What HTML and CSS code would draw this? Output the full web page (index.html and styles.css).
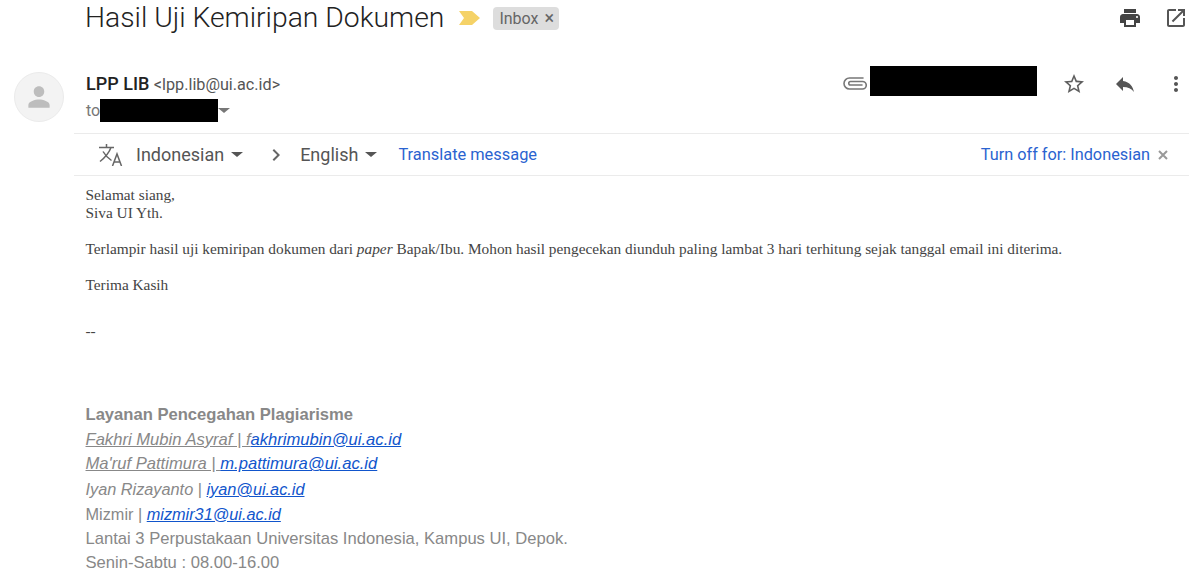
FILE: index.html
```html
<!DOCTYPE html>
<html>
<head>
  <title>Hasil Uji Kemiripan Dokumen</title>
  <link rel="stylesheet" href="styles.css">
</head>
<body>
  <div class="subject-row">
    <h1 class="subject">Hasil Uji Kemiripan Dokumen</h1>
    <svg class="marker" width="21" height="14" viewBox="0 0 21 14"><path d="M0 0H13L21 7L13 14H0L5 7Z" fill="#f5d267"/></svg>
    <span class="label">Inbox <span class="label-x">×</span></span>
    <div class="top-icons">
      <svg width="24" height="24" viewBox="0 0 24 24"><path fill="#444" d="M19 8H5c-1.66 0-3 1.34-3 3v6h4v4h12v-4h4v-6c0-1.66-1.34-3-3-3zm-3 11H8v-5h8v5zm3-7c-.55 0-1-.45-1-1s.45-1 1-1 1 .45 1 1-.45 1-1 1zm-1-9H6v4h12V3z"/></svg>
      <svg width="24" height="24" viewBox="0 0 24 24"><path fill="#555" d="M19 19H5V5h7V3H5c-1.1 0-2 .9-2 2v14c0 1.1.9 2 2 2h14c1.1 0 2-.9 2-2v-7h-2v7zM14 3v2h3.59l-9.83 9.83 1.41 1.41L19 6.41V10h2V3h-7z"/></svg>
    </div>
  </div>

  <div class="sender-row">
    <div class="avatar">
      <svg width="30" height="30" viewBox="0 0 24 24"><path fill="#bdbdbd" d="M12 12c2.500 0 4.200-2 4.200-4.400S14.500 3.300 12 3.300 7.800 5.200 7.800 7.600 9.500 12 12 12zm0 2c-3 0-8.500 1.500-8.500 4.300V20.500h17v-2.200C20.500 15.500 15 14 12 14z"/></svg>
    </div>
    <div class="sender-info">
      <div class="from"><b>LPP LIB</b> <span class="address">&lt;lpp.lib@ui.ac.id&gt;</span></div>
      <div class="to">to<span class="redact redact-to"></span><span class="caret caret-light"></span></div>
    </div>
    <div class="sender-actions">
      <svg class="clip" width="24" height="13" viewBox="0 0 24 13"><path fill="none" stroke="#777" stroke-width="1.600" stroke-linecap="round" d="M20 1H6.500a5.500 5.500 0 0 0 0 11H19.500a3.700 3.700 0 0 0 0-7.500H7.500a1.700 1.700 0 0 0 0 3.500H19"/></svg>
      <span class="redact redact-date"></span>
      <svg class="star" width="24" height="24" viewBox="0 0 24 24"><path fill="#5f5f5f" d="M22 9.240l-7.190-.62L12 2 9.190 8.630 2 9.240l5.460 4.730L5.820 21 12 17.270 18.180 21l-1.630-7.030L22 9.240zM12 15.400l-3.760 2.270 1-4.280-3.320-2.880 4.380-.38L12 6.100l1.710 4.040 4.380.38-3.320 2.880 1 4.280L12 15.400z"/></svg>
      <svg class="reply" width="24" height="24" viewBox="0 0 24 24"><path fill="#555" d="M10 9V5l-7 7 7 7v-4.100c5 0 8.500 1.600 11 5.100-1-5-4-10-11-11z"/></svg>
      <svg class="more" width="24" height="24" viewBox="0 0 24 24"><path fill="#555" d="M12 8c1.100 0 2-.9 2-2s-.9-2-2-2-2 .9-2 2 .9 2 2 2zm0 2c-1.100 0-2 .9-2 2s.9 2 2 2 2-.9 2-2-.9-2-2-2zm0 6c-1.100 0-2 .9-2 2s.9 2 2 2 2-.9 2-2-.9-2-2-2z"/></svg>
    </div>
  </div>

  <div class="translate-bar">
    <svg class="translate-icon" width="26" height="22" viewBox="0 0 26 22"><path fill="none" stroke="#666" stroke-width="1.500" d="M1 3.500H16M8.500 0V3.500M13 3.500C11 9 7 13.500 2 17.500M5 7.500C7 11 10 14 13.500 16.500M14.500 22L19 10L23.500 22M16 18H22"/></svg>
    <span class="lang">Indonesian</span><span class="caret"></span>
    <svg class="chevron" width="24" height="24" viewBox="0 0 24 24"><path fill="#666" d="M8.590 16.590L13.170 12 8.590 7.410 10 6l6 6-6 6z"/></svg>
    <span class="lang">English</span><span class="caret"></span>
    <span class="translate-link">Translate message</span>
    <span class="turn-off">Turn off for: Indonesian</span>
    <svg class="close" width="12" height="12" viewBox="0 0 12 12"><path stroke="#999" stroke-width="2" d="M2 2L10 10M10 2L2 10"/></svg>
  </div>

  <div class="message">
    <p class="greeting">Selamat siang,<br>Siva UI Yth.</p>
    <p class="para">Terlampir hasil uji kemiripan dokumen dari <i>paper</i> Bapak/Ibu. Mohon hasil pengecekan diunduh paling lambat 3 hari terhitung sejak tanggal email ini diterima.</p>
    <p class="para">Terima Kasih</p>
    <p class="dashes">--</p>
  </div>

  <div class="signature">
    <div><b>Layanan Pencegahan Plagiarisme</b></div>
    <div><i class="under">Fakhri Mubin Asyraf | f</i><i class="mail">akhrimubin@ui.ac.id</i></div>
    <div><i class="under">Ma'ruf Pattimura | </i><i class="mail">m.pattimura@ui.ac.id</i></div>
    <div class="tight"><i>Iyan Rizayanto</i> | <i class="mail">iyan@ui.ac.id</i></div>
    <div class="tight">Mizmir | <i class="mail">mizmir31@ui.ac.id</i></div>
    <div>Lantai 3 Perpustakaan Universitas Indonesia, Kampus UI, Depok.</div>
    <div>Senin-Sabtu : 08.00-16.00</div>
  </div>
</body>
</html>
```

FILE: styles.css
```css
/* Mail view */
body {
  margin: 0;
  height: 576px;
  overflow: hidden;
  background: #fff;
  font-family: Roboto, "Liberation Sans", sans-serif;
  color: #222;
}

.subject-row {
  display: flex;
  align-items: center;
  height: 36px;
  padding: 0 12px 0 85px;
}

.subject {
  margin: 0;
  font-size: 28.3px;
  line-height: 34px;
  font-weight: 300;
  color: #222;
}

.marker {
  margin-left: 15px;
}

.label {
  margin-left: 13px;
  padding: 0 5px 0 6px;
  height: 23px;
  line-height: 22px;
  font-size: 16px;
  color: #666;
  background: #ddd;
  border-radius: 4px;
}

.label-x {
  margin-left: 2px;
  font-size: 18px;
}

.top-icons {
  display: flex;
  gap: 22px;
  margin-left: auto;
}

.sender-row {
  display: flex;
  height: 97px;
  padding: 36px 12px 0 14px;
  box-sizing: border-box;
}

.avatar {
  display: flex;
  align-items: center;
  justify-content: center;
  width: 50px;
  height: 50px;
  box-sizing: border-box;
  margin-right: 22px;
  background: #f3f3f3;
  border: 1px solid #ebebeb;
  border-radius: 50%;
}

.sender-info {
  flex: 1;
  padding-top: 1px;
}

.from {
  font-size: 18px;
  line-height: 21px;
}

.from b {
  font-weight: 500;
}

.address {
  font-size: 16.2px;
  color: #555;
}

.to {
  display: flex;
  align-items: center;
  height: 23px;
  margin-top: 4px;
  font-size: 16px;
  line-height: 20px;
  color: #777;
}

.redact {
  display: block;
  background: #000;
}

.redact-to {
  width: 118px;
  height: 23px;
}

.redact-date {
  width: 167px;
  height: 30px;
  margin-left: 3px;
}

.caret {
  display: inline-block;
  width: 0;
  height: 0;
  border-left: 6px solid transparent;
  border-right: 6px solid transparent;
  border-top: 5px solid #555;
  margin-left: 7px;
}

.caret-light {
  margin-left: 0;
  border-top-color: #777;
}

.sender-actions {
  display: flex;
  align-items: center;
  align-self: flex-start;
  height: 30px;
  margin-top: -6px;
}

.sender-actions svg {
  margin-top: 6px;
}

.sender-actions .clip {
  margin-top: 4px;
}

.star {
  margin-left: 25px;
}

.reply {
  margin-left: 27px;
}

.more {
  margin-left: 27px;
}

.translate-bar {
  display: flex;
  align-items: center;
  height: 41px;
  margin: 0 11px 0 74px;
  padding: 0 20px 0 24px;
  border-top: 1px solid #ebebeb;
  border-bottom: 1px solid #ebebeb;
  font-size: 18px;
  color: #555;
}

.translate-icon {
  margin-right: 12px;
}

.chevron {
  margin: 0 12px 0 21px;
}

.translate-link {
  margin-left: 21px;
  font-size: 16.4px;
  color: #2a63d0;
}

.turn-off {
  margin-left: auto;
  font-size: 16.3px;
  color: #2a63d0;
}

.close {
  margin-left: 7px;
}

.message {
  padding: 10px 0 0 85.5px;
  font-family: "Liberation Serif", serif;
  font-size: 15.33px;
  line-height: 18px;
  color: #444;
}

.message p {
  margin: 0;
}

.message .para {
  margin-top: 18px;
}

.message .dashes {
  margin-top: 28px;
}

.signature {
  padding: 63px 0 0 85.5px;
  font-family: "Liberation Sans", sans-serif;
  font-size: 16.6px;
  line-height: 24.7px;
  color: #888;
}

.signature .tight {
  font-size: 16.3px;
}

.under {
  text-decoration: underline;
}

.mail {
  color: #1155cc;
  text-decoration: underline;
}
```
